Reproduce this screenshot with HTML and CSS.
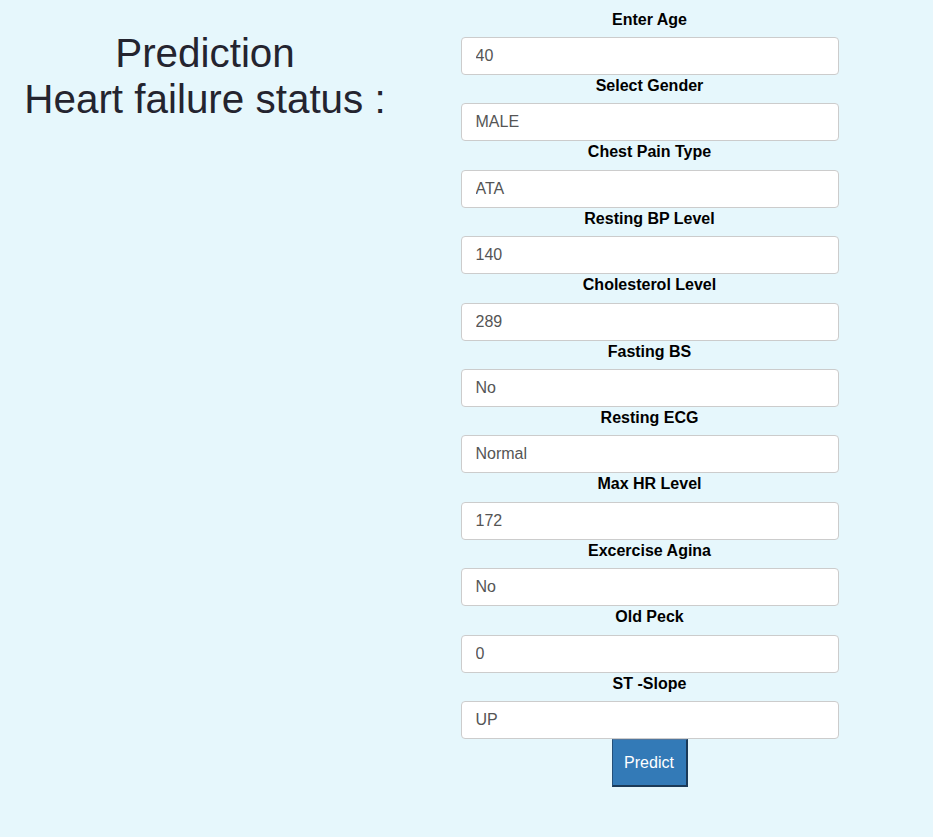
FILE: index.html
```html
<!DOCTYPE html>
<html>
<head>
<meta charset="utf-8">
<title>Heart failure prediction</title>
<link rel="stylesheet" href="styles.css">
</head>
<body>
<div class="page">
  <section class="result">
    <h1 class="title">Prediction<br>Heart failure status :</h1>
  </section>
  <section class="form-col">
    <form class="form">
      <label class="label">Enter Age</label>
      <input class="field" type="text" value="40">
      <label class="label">Select Gender</label>
      <input class="field" type="text" value="MALE">
      <label class="label">Chest Pain Type</label>
      <input class="field" type="text" value="ATA">
      <label class="label">Resting BP Level</label>
      <input class="field" type="text" value="140">
      <label class="label">Cholesterol Level</label>
      <input class="field" type="text" value="289">
      <label class="label">Fasting BS</label>
      <input class="field" type="text" value="No">
      <label class="label">Resting ECG</label>
      <input class="field" type="text" value="Normal">
      <label class="label">Max HR Level</label>
      <input class="field" type="text" value="172">
      <label class="label">Excercise Agina</label>
      <input class="field" type="text" value="No">
      <label class="label">Old Peck</label>
      <input class="field" type="text" value="0">
      <label class="label">ST -Slope</label>
      <input class="field" type="text" value="UP">
      <button class="btn" type="button">Predict</button>
    </form>
  </section>
</div>
</body>
</html>
```
FILE: styles.css
```css
html, body {
  margin: 0;
  padding: 0;
  background: #e6f7fc;
  height: 100%;
}
body {
  font-family: "Liberation Sans", Arial, sans-serif;
}
.page {
  display: grid;
  grid-template-columns: 410px 479px;
  padding-top: 8.6px;
}
.result {
  text-align: center;
}
.title {
  margin: 21px 0 0;
  font-size: 40.4px;
  font-weight: normal;
  line-height: 46px;
  color: #24242f;
}
.form-col {
  display: flex;
  justify-content: center;
}
.form {
  width: 378px;
  display: flex;
  flex-direction: column;
  align-items: center;
}
.label {
  display: block;
  font-size: 16px;
  font-weight: bold;
  line-height: 22px;
  height: 28.4px;
  color: #000;
  text-align: center;
}
.field {
  box-sizing: border-box;
  width: 378px;
  height: 38px;
  margin: 0;
  padding: 0 14px;
  font-family: "Liberation Sans", Arial, sans-serif;
  font-size: 16px;
  color: #555;
  background: #fff;
  border: 1px solid #ccc;
  border-radius: 4px;
  outline: none;
}
.btn {
  box-sizing: border-box;
  width: 76px;
  height: 48px;
  margin: 0;
  padding: 1px 0 0;
  font-family: "Liberation Sans", Arial, sans-serif;
  font-size: 16px;
  color: #fff;
  background: #337ab7;
  border-style: solid;
  border-width: 1px 2px 2px 1px;
  border-color: #4f77a0 #1b3a58 #1b3a58 #24507a;
  border-radius: 0;
}
```
